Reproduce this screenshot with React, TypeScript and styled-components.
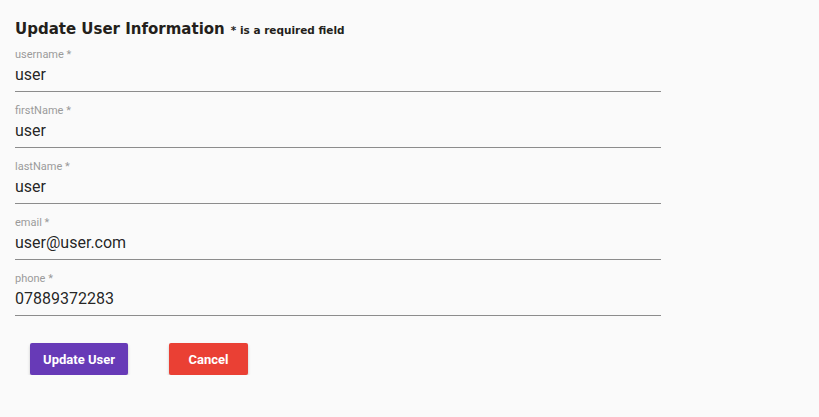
import React from "react";
import styled, { createGlobalStyle } from "styled-components";

const Global = createGlobalStyle`
  html, body { margin: 0; padding: 0; background: #fafafa; }
  body { font-family: Roboto, "Liberation Sans", sans-serif; }
`;

const Page = styled.div`
  padding: 18px 15px 0 15px;
  width: 646px;
`;

const Title = styled.h2`
  margin: 0 0 7px 0;
  font-family: "DejaVu Sans", Verdana, sans-serif;
  font-weight: bold;
  font-size: 15px;
  line-height: 22px;
  color: #241f1b;
  display: flex;
  align-items: baseline;
  gap: 6px;
`;

const Note = styled.span`
  font-size: 10.5px;
  font-weight: bold;
`;

const Field = styled.div<{ $first?: boolean }>`
  display: flex;
  flex-direction: column;
  box-sizing: border-box;
  border-bottom: 1px solid #8c8c8c;
  padding: ${(p) => (p.$first ? 0 : 12)}px 0 6px 0;
`;

const Label = styled.label`
  font-size: 11px;
  line-height: 14px;
  color: #9a9a9a;
`;

const Value = styled.input`
  border: none;
  background: transparent;
  outline: none;
  padding: 0;
  margin: 3px 0 0 0;
  font-family: Roboto, sans-serif;
  font-size: 16px;
  line-height: 20px;
  height: 20px;
  color: rgba(0, 0, 0, 0.87);
`;

const Actions = styled.div`
  display: flex;
  gap: 41px;
  padding: 27px 0 0 15px;
`;

const Button = styled.button<{ $bg: string; $w: number }>`
  width: ${(p) => p.$w}px;
  height: 32px;
  border: none;
  border-radius: 2px;
  background: ${(p) => p.$bg};
  color: #fff;
  font-family: Roboto, sans-serif;
  font-weight: 700;
  font-size: 13px;
  box-shadow: 0 2px 3px rgba(0, 0, 0, 0.22);
  padding: 0;
`;

const fields = [
  ["username", "user"],
  ["firstName", "user"],
  ["lastName", "user"],
  ["email", "user@user.com"],
  ["phone", "07889372283"],
];

export default function App() {
  return (
    <Page>
      <Global />
      <Title>
        Update User Information <Note>* is a required field</Note>
      </Title>
      {fields.map(([k, v], i) => (
        <Field key={k} $first={i === 0}>
          <Label>{k} *</Label>
          <Value defaultValue={v} />
        </Field>
      ))}
      <Actions>
        <Button $bg="#673ab7" $w={98}>Update User</Button>
        <Button $bg="#ea4034" $w={79}>Cancel</Button>
      </Actions>
    </Page>
  );
}
